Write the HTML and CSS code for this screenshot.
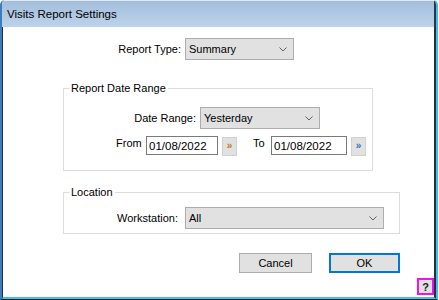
FILE: index.html
```html
<!DOCTYPE html>
<html lang="en">
<head>
  <meta charset="UTF-8" />
  <title>Visits Report Settings</title>
  <link rel="stylesheet" href="styles.css">
</head>
<body>
  <div class="window">
    <div class="titlebar">Visits Report Settings</div>
    <div class="client">

      <div class="row row-type">
        <label class="lbl lbl-type">Report Type:</label>
        <div class="combo combo-type">
          <span>Summary</span>
          <svg width="8" height="5" viewBox="0 0 8 5"><path d="M0.5 0.5 L4 4 L7.5 0.5" fill="none" stroke="#606060" stroke-width="1"/></svg>
        </div>
      </div>

      <fieldset class="group group-date">
        <legend>Report Date Range</legend>
        <div class="row row-range">
          <label class="lbl lbl-range">Date Range:</label>
          <div class="combo combo-range">
            <span>Yesterday</span>
            <svg width="8" height="5" viewBox="0 0 8 5"><path d="M0.5 0.5 L4 4 L7.5 0.5" fill="none" stroke="#606060" stroke-width="1"/></svg>
          </div>
        </div>
        <div class="row row-dates">
          <span class="lbl-from">From</span>
          <input class="date date-from" type="text" value="01/08/2022">
          <button class="pick pick-from">&raquo;</button>
          <span class="lbl-to">To</span>
          <input class="date date-to" type="text" value="01/08/2022">
          <button class="pick pick-to">&raquo;</button>
        </div>
      </fieldset>

      <fieldset class="group group-loc">
        <legend>Location</legend>
        <div class="row row-ws">
          <label class="lbl lbl-ws">Workstation:</label>
          <div class="combo combo-ws">
            <span>All</span>
            <svg width="8" height="5" viewBox="0 0 8 5"><path d="M0.5 0.5 L4 4 L7.5 0.5" fill="none" stroke="#606060" stroke-width="1"/></svg>
          </div>
        </div>
      </fieldset>

      <div class="actions">
        <button class="btn">Cancel</button>
        <button class="btn btn-ok">OK</button>
      </div>

      <div class="help-row">
        <button class="help">?</button>
      </div>
    </div>
  </div>
</body>
</html>
```

FILE: styles.css
```css
* { box-sizing: border-box; }
body {
  margin: 0;
  background: #fff;
  font-family: 'Liberation Sans', Arial, sans-serif;
  font-size: 11px;
  color: #000;
}
.window {
  width: 438px;
  height: 300px;
  display: flex;
  flex-direction: column;
  border-left: 2px solid #3c7fb8;
  border-right: 2px solid #3fc2ea;
  border-bottom: 1px solid #1c1c1c;
  border-radius: 5px 5px 0 0;
  overflow: hidden;
}
.titlebar {
  height: 27px;
  flex: none;
  padding: 7px 0 0 5px;
  font-size: 11.5px;
  border-top: 1px solid #dfe9f4;
  border-right: 2px solid #2a3644;
  background: linear-gradient(#a3bddb, #bcd3ea);
}
.client {
  flex: 1;
  background: #fff;
  border-left: 1px solid #22303e;
  border-right: 2px solid #22303e;
  border-bottom: 2px solid #3fc2ea;
}
.row { display: flex; align-items: center; }
.lbl { width: 80px; text-align: right; }

.row-type { margin: 11px 0 0 98px; gap: 4px; }

.combo {
  height: 22px;
  display: flex;
  align-items: center;
  justify-content: space-between;
  padding: 0 6px 0 3px;
  background: #e1e1e1;
  border: 1px solid #adadad;
}
.combo-type { width: 109px; }
.combo-range { width: 120px; }
.combo-ws { width: 199px; }

.group {
  margin: 21px 0 0 60px;
  padding: 0;
  border: 1px solid #dcdcdc;
}
.group legend {
  margin-left: 5px;
  padding: 0 2px;
  line-height: 14px;
}
.group-date { width: 310px; padding-top: 12px; padding-bottom: 14px; }
.group-loc { width: 337px; margin-top: 14px; padding-top: 8px; padding-bottom: 4px; }

.row-range { margin-left: 52px; gap: 4px; }

.row-dates { margin: 7px 0 0 52px; align-items: flex-start; height: 20px; }
.lbl-from { width: 26px; margin-right: 4px; line-height: 15px; }
.lbl-to { width: 14px; margin: 0 4px 0 16px; line-height: 15px; }
.date {
  height: 19px;
  padding: 0 0 0 2px;
  border: 1px solid #7a7a7a;
  font: 11.5px 'Liberation Sans', Arial, sans-serif;
  color: #000;
  background: #fff;
}
.date-from { width: 72px; }
.date-to { width: 76px; }
.pick {
  width: 15px;
  height: 19px;
  margin: 1px 0 0 4px;
  padding: 0 0 2px;
  background: #e1e1e1;
  border: 1px solid #d0d0d0;
  font: bold 10px 'Liberation Sans', Arial, sans-serif;
}
.pick-from { color: #c07a10; }
.pick-to { color: #3f6fb5; }

.row-ws { margin-left: 34px; gap: 7px; }

.actions {
  display: flex;
  justify-content: flex-end;
  gap: 17px;
  margin-top: 19px;
  padding-right: 34px;
}
.btn {
  height: 20px;
  width: 73px;
  padding: 0;
  background: #e1e1e1;
  border: 1px solid #adadad;
  font: 11px 'Liberation Sans', Arial, sans-serif;
  color: #000;
}
.btn-ok { width: 71px; border: 2px solid #0078d7; }

.help-row { display: flex; justify-content: flex-end; margin-top: 5px; }
.help {
  width: 17px;
  height: 17px;
  padding: 0;
  background: #e1e1e1;
  border: 2px solid #f010f0;
  font: bold 11px 'Liberation Sans', Arial, sans-serif;
  color: #1a1a2a;
}
```
